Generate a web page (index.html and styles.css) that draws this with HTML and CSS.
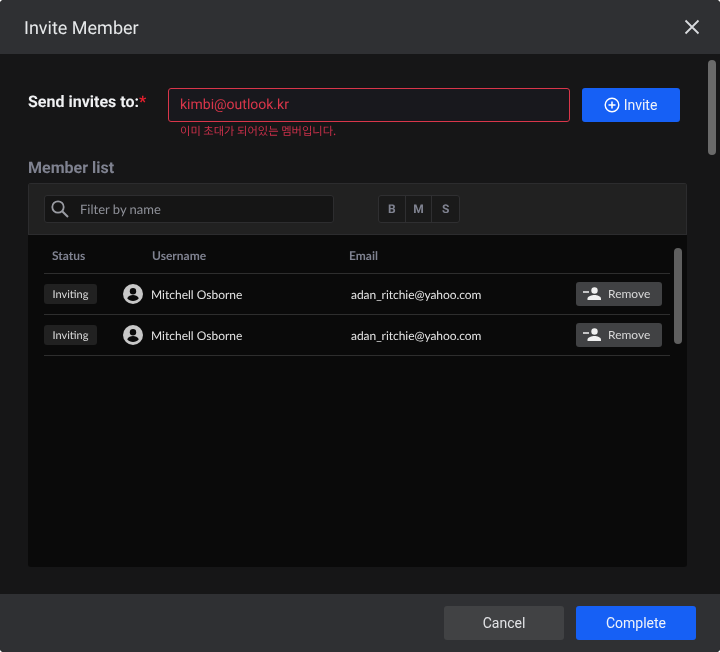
FILE: index.html
```html
<!DOCTYPE html>
<html lang="en">
<head>
<meta charset="utf-8">
<title>Invite Member</title>
<link rel="stylesheet" href="styles.css">
</head>
<body>
<div class="dialog">
  <header class="head">
    <h1 class="title">Invite Member</h1>
    <svg class="close" width="16" height="16" viewBox="0 0 16 16"><path d="M1.5 1.5l13 13M14.5 1.5l-13 13" stroke="#d8dade" stroke-width="1.8" fill="none"/></svg>
  </header>
  <main class="body">
    <div class="invite-row">
      <div class="label">Send invites to:<span class="req">*</span></div>
      <div class="field">
        <div class="input-err">kimbi@outlook.kr</div>
        <div class="err-text">이미 초대가 되어있는 멤버입니다.</div>
      </div>
      <button class="btn-invite">
        <svg width="16" height="16" viewBox="0 0 16 16"><circle cx="8" cy="8" r="6.8" fill="none" stroke="#fff" stroke-width="1.4"/><path d="M8 4.5v7M4.5 8h7" stroke="#fff" stroke-width="1.5"/></svg>
        Invite
      </button>
    </div>
    <h2 class="section">Member list</h2>
    <section class="panel">
      <div class="toolbar">
        <div class="filter">
          <svg width="20" height="20" viewBox="0 0 20 20"><circle cx="8" cy="8" r="5.7" fill="none" stroke="#9a9ca3" stroke-width="1.8"/><path d="M12.2 12.2l5.8 5.8" stroke="#9a9ca3" stroke-width="2"/></svg>
          <span class="filter-text">Filter by name</span>
        </div>
        <div class="sizes"><span class="size">B</span><span class="size">M</span><span class="size">S</span></div>
      </div>
      <div class="table">
        <div class="thead">
          <span class="th th-status">Status</span>
          <span class="th th-user">Username</span>
          <span class="th">Email</span>
        </div>
        <div class="row">
          <span class="badge">Inviting</span>
          <svg class="avatar" width="20" height="20" viewBox="0 0 20 20"><circle cx="10" cy="10" r="10" fill="#c8c8c8"/><circle cx="10" cy="7.2" r="3.2" fill="#0a0a0a"/><path d="M4.2 14.2c1-2.4 3.6-3.3 5.8-3.3s4.800.9 5.800 3.300c-1.400 1.700-3.500 2.800-5.800 2.800s-4.400-1.100-5.800-2.800z" fill="#0a0a0a"/></svg>
          <span class="name">Mitchell Osborne</span>
          <span class="email">adan_ritchie@yahoo.com</span>
          <button class="btn-remove">
            <svg width="20" height="14" viewBox="0 0 20 14"><path d="M1 5h6" stroke="#f0f0f0" stroke-width="1.500"/><circle cx="12.500" cy="3.500" r="3.200" fill="#f0f0f0"/><path d="M5.500 13v-1.500c0-2.200 4.300-3.500 7-3.500s6.500 1.300 6.500 3.500V13z" fill="#f0f0f0"/></svg>
            Remove
          </button>
        </div>
        <div class="row">
          <span class="badge">Inviting</span>
          <svg class="avatar" width="20" height="20" viewBox="0 0 20 20"><circle cx="10" cy="10" r="10" fill="#c8c8c8"/><circle cx="10" cy="7.2" r="3.2" fill="#0a0a0a"/><path d="M4.2 14.2c1-2.4 3.6-3.3 5.8-3.3s4.800.9 5.800 3.300c-1.400 1.700-3.500 2.800-5.800 2.800s-4.400-1.100-5.800-2.800z" fill="#0a0a0a"/></svg>
          <span class="name">Mitchell Osborne</span>
          <span class="email">adan_ritchie@yahoo.com</span>
          <button class="btn-remove">
            <svg width="20" height="14" viewBox="0 0 20 14"><path d="M1 5h6" stroke="#f0f0f0" stroke-width="1.500"/><circle cx="12.500" cy="3.500" r="3.200" fill="#f0f0f0"/><path d="M5.500 13v-1.500c0-2.200 4.300-3.500 7-3.500s6.500 1.300 6.500 3.500V13z" fill="#f0f0f0"/></svg>
            Remove
          </button>
        </div>
        <div class="scroll-inner"></div>
      </div>
    </section>
    <div class="scroll-outer"></div>
  </main>
  <footer class="foot">
    <button class="btn btn-cancel">Cancel</button>
    <button class="btn btn-done">Complete</button>
  </footer>
</div>
</body>
</html>
```
FILE: styles.css
```css
* { box-sizing: border-box; }
html, body { margin: 0; padding: 0; background: #fff; }
body { width: 720px; height: 652px; font-family: Roboto, "Noto Sans CJK KR", sans-serif; overflow: hidden; text-rendering: geometricPrecision; }
.dialog { width: 720px; height: 652px; display: flex; flex-direction: column; background: #161617; border-radius: 4px; overflow: hidden; will-change: transform; }
.head { height: 54px; flex: none; background: #2f3033; display: flex; align-items: center; justify-content: space-between; padding: 0 20px 0 24px; }
.title { margin: 2px 0 0; font-size: 18px; font-weight: 400; color: #e6e8ea; }
.close { display: block; }
.body { position: relative; flex: 1; padding: 34px 33px 0 28px; }
.invite-row { display: flex; align-items: flex-start; }
.label { width: 140px; height: 26px; font-size: 16px; font-weight: 700; line-height: 27px; color: #f0f1f3; }
.req { color: #e5202e; }
.field { width: 402px; }
.input-err { height: 34px; border: 1px solid #d9364a; border-radius: 3px; background: #18181d; color: #d9364a; font-size: 14px; line-height: 33px; padding-left: 11px; }
.err-text { margin-top: 1px; font-size: 11.3px; line-height: 17px; padding-left: 12px; color: #c9304a; font-family: "Noto Sans CJK KR", sans-serif; }
.btn-invite { margin-left: 12px; width: 98px; height: 34px; border: 0; border-radius: 3px; background: #1660f5; color: #eef2fa; font: 400 14px Roboto, sans-serif; display: flex; align-items: center; justify-content: center; gap: 4px; padding: 0 1px 0 0; }
.section { margin: 18px 0 5px; font-size: 16px; font-weight: 700; line-height: 20px; color: #7f8290; }
.panel { width: 659px; height: 384px; border-radius: 3px; overflow: hidden; display: flex; flex-direction: column; }
.toolbar { height: 52px; flex: none; background: #212121; border: 1px solid #2c2c2e; padding: 11px 15px; display: flex; gap: 44px; }
.filter { width: 290px; height: 28px; background: #151515; border: 1px solid #2d2d2f; border-radius: 3px; display: flex; align-items: center; padding-left: 5px; }
.filter-text { margin-left: 10px; font: 400 13px Lato, sans-serif; color: #8e9098; }
.sizes { width: 82px; height: 28px; display: flex; background: #1a1a1a; border: 1px solid #2f2f31; border-radius: 3px; }
.size { width: 27px; text-align: center; font-size: 12px; font-weight: 700; line-height: 26px; color: #7f8290; border-right: 1px solid #2f2f31; }
.size:last-child { border-right: 0; }
.table { position: relative; flex: 1; background: #0a0a0a; padding: 0 17px 0 16px; font-family: Lato, sans-serif; }
.thead { height: 39px; display: flex; align-items: center; padding: 2px 0 0 8px; border-bottom: 1px solid #2e2e2e; font-size: 12px; }
.th { font-weight: 700; color: #7f8290; }
.th-status { width: 100px; }
.th-user { width: 197px; }
.row { height: 41px; display: flex; align-items: center; border-bottom: 1px solid #2e2e2e; }
.badge { width: 53px; height: 20px; border-radius: 3px; background: #212121; color: #dcdcdc; font-size: 11px; line-height: 21px; text-align: center; }
.avatar { margin-left: 26px; flex: none; }
.name { width: 200px; margin-left: 8px; font-size: 12px; color: #e4e4e4; }
.email { width: 225px; font-size: 12px; color: #e4e4e4; letter-spacing: -0.05px; }
.btn-remove { width: 86px; height: 24px; border: 0; border-radius: 3px; background: #414244; color: #d8d8d8; font: 400 12px/24px Lato, sans-serif; display: flex; align-items: flex-start; padding: 0 0 0 6px; gap: 6px; }
.btn-remove svg { margin-top: 5px; }
.scroll-inner { position: absolute; left: 646px; top: 13px; width: 8px; height: 96px; border-radius: 4px; background: #5f5f5f; }
.scroll-outer { position: absolute; left: 708px; top: 6px; width: 8px; height: 95px; border-radius: 4px; background: #6a6a6a; }
.foot { height: 58px; flex: none; background: #2f3033; display: flex; justify-content: flex-end; align-items: center; gap: 12px; padding: 0 24px; }
.btn { width: 120px; height: 34px; border: 0; border-radius: 3px; font: 400 14px Roboto, sans-serif; }
.btn-cancel { background: #414244; color: #e2e3e6; }
.btn-done { background: #1660f5; color: #eef2fa; }
```
